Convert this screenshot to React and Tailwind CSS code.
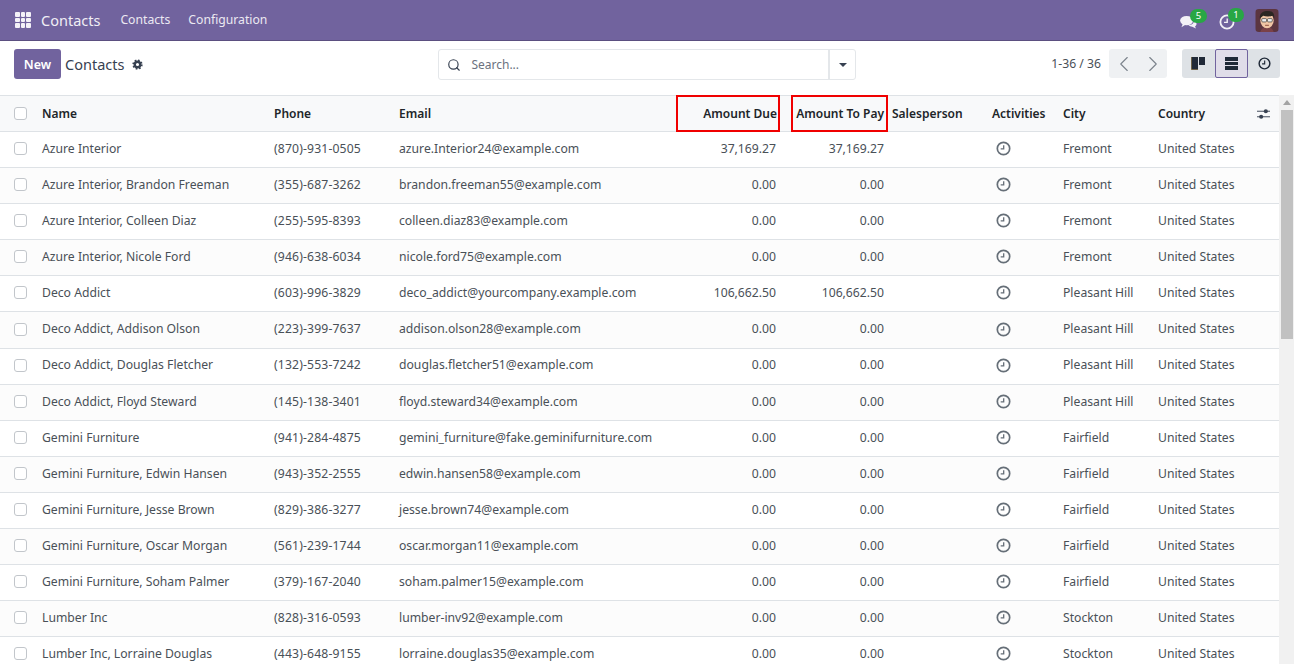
import { ChevronLeft, ChevronRight, Search } from "lucide-react";

const rows = [
  ["Azure Interior", "(870)-931-0505", "azure.Interior24@example.com", "37,169.27", "37,169.27", "Fremont"],
  ["Azure Interior, Brandon Freeman", "(355)-687-3262", "brandon.freeman55@example.com", "0.00", "0.00", "Fremont"],
  ["Azure Interior, Colleen Diaz", "(255)-595-8393", "colleen.diaz83@example.com", "0.00", "0.00", "Fremont"],
  ["Azure Interior, Nicole Ford", "(946)-638-6034", "nicole.ford75@example.com", "0.00", "0.00", "Fremont"],
  ["Deco Addict", "(603)-996-3829", "deco_addict@yourcompany.example.com", "106,662.50", "106,662.50", "Pleasant Hill"],
  ["Deco Addict, Addison Olson", "(223)-399-7637", "addison.olson28@example.com", "0.00", "0.00", "Pleasant Hill"],
  ["Deco Addict, Douglas Fletcher", "(132)-553-7242", "douglas.fletcher51@example.com", "0.00", "0.00", "Pleasant Hill"],
  ["Deco Addict, Floyd Steward", "(145)-138-3401", "floyd.steward34@example.com", "0.00", "0.00", "Pleasant Hill"],
  ["Gemini Furniture", "(941)-284-4875", "gemini_furniture@fake.geminifurniture.com", "0.00", "0.00", "Fairfield"],
  ["Gemini Furniture, Edwin Hansen", "(943)-352-2555", "edwin.hansen58@example.com", "0.00", "0.00", "Fairfield"],
  ["Gemini Furniture, Jesse Brown", "(829)-386-3277", "jesse.brown74@example.com", "0.00", "0.00", "Fairfield"],
  ["Gemini Furniture, Oscar Morgan", "(561)-239-1744", "oscar.morgan11@example.com", "0.00", "0.00", "Fairfield"],
  ["Gemini Furniture, Soham Palmer", "(379)-167-2040", "soham.palmer15@example.com", "0.00", "0.00", "Fairfield"],
  ["Lumber Inc", "(828)-316-0593", "lumber-inv92@example.com", "0.00", "0.00", "Stockton"],
  ["Lumber Inc, Lorraine Douglas", "(443)-648-9155", "lorraine.douglas35@example.com", "0.00", "0.00", "Stockton"],
];

function ClockIcon({ className }) {
  return (
    <svg viewBox="0 0 16 16" className={className} fill="none" stroke="currentColor">
      <circle cx="8" cy="8" r="6.6" strokeWidth="1.8" />
      <path d="M8.200 4.400V8.400H5" strokeWidth="1.4" />
    </svg>
  );
}

function Avatar() {
  return (
    <svg viewBox="0 0 24 24" className="w-6 h-[23px] rounded-sm">
      <rect width="24" height="24" fill="#5b3540" />
      <path d="M5 24c1-4 4-5 7-5s6 1 7 5z" fill="#7a4148" />
      <ellipse cx="12" cy="12" rx="7" ry="8" fill="#f0c5a5" />
      <path d="M4.500 10C4 4 8 2 13 2c5 0 7 3 6.500 8l-1.500-3c-3 1-7 1-10 0z" fill="#2b2622" />
      <rect x="6.500" y="10" width="5" height="3.500" rx="1" fill="#eee" stroke="#333" strokeWidth=".7" />
      <rect x="12.500" y="10" width="5" height="3.500" rx="1" fill="#eee" stroke="#333" strokeWidth=".7" />
      <path d="M10 17h4" stroke="#8a4a3c" strokeWidth="1" />
    </svg>
  );
}

function Checkbox() {
  return <span className="block w-[13px] h-[13px] rounded-[3px] border border-[#c2c6cb] bg-white" />;
}

export default function App() {
  return (
    <div className="h-[664px] overflow-hidden bg-white text-[12.2px] text-[#495057] font-['Noto_Sans',sans-serif] flex flex-col">
      {/* navbar */}
      <header className="h-[41px] shrink-0 bg-[#71639e] border-b border-[#5b4f80] flex items-center text-white">
        <div className="ml-[15px] grid grid-cols-3 gap-[1px] w-[16px] h-[16px]">
          {Array.from({ length: 9 }).map((_, i) => (
            <span key={i} className="bg-[#f3f1f7] rounded-[1px]" />
          ))}
        </div>
        <span className="ml-[10px] mt-px text-[14.500px] text-[#f0eef5]">Contacts</span>
        <span className="ml-[20px] mt-px text-[#ece9f2]">Contacts</span>
        <span className="ml-[18px] mt-px text-[#ece9f2]">Configuration</span>
        <div className="ml-auto flex items-center">
          <div className="relative mr-[22px]">
            <svg viewBox="0 0 18 15" className="w-[17px] h-[14px] mt-[3px]" fill="#f3f1f7">
              <ellipse cx="7" cy="6" rx="7" ry="5" />
              <path d="M3 9l-1.500 4 5-3z" />
              <path d="M15 6c2 1 3 3 2.500 4.500-.4 1-1 1.500-1.500 1.700l1 2.300-4-2c-1.500 0-3-.5-4-1.500 3 0 6-2 6-5z" />
            </svg>
            <span className="absolute -top-[3px] left-[10px] h-[14px] min-w-[17px] rounded-full bg-[#28a745] text-[9.500px] leading-[14px] text-center text-white">5</span>
          </div>
          <div className="relative mr-[20px]">
            <ClockIcon className="w-[16px] h-[16px] mt-[3px] text-[#f3f1f7]" />
            <span className="absolute -top-[3px] left-[9px] h-[14px] min-w-[16px] rounded-full bg-[#28a745] text-[9.500px] leading-[14px] text-center text-white">1</span>
          </div>
          <div className="mr-[15px]"><Avatar /></div>
        </div>
      </header>

      {/* control panel */}
      <div className="h-[54px] shrink-0 flex items-start pt-[8px] px-[14px]">
        <button className="h-[30px] w-[47px] pt-[2px] rounded-[3px] bg-[#71639e] text-white font-semibold text-[12.500px]">New</button>
        <span className="ml-[4px] leading-[30px] text-[14.500px] text-[#374151]">Contacts</span>
        <svg viewBox="0 0 16 16" className="ml-[8px] mt-[10px] w-[11px] h-[11px] text-[#374151]" fill="none" stroke="currentColor">
          <circle cx="8" cy="8" r="4" strokeWidth="3.400" />
          <circle cx="8" cy="8" r="6.200" strokeWidth="2.600" strokeDasharray="2.400 2.470" />
        </svg>

        <div className="ml-[295px] flex h-[31px] w-[418px] border border-[#e4e7ea] rounded-[3px]">
          <div className="flex-1 flex items-center border-r-2 border-[#e4e7ea]">
            <Search className="ml-[8px] w-[14px] h-[14px] text-[#374151]" strokeWidth={2} />
            <span className="ml-[10px] text-[12px] text-[#6b7280]">Search...</span>
          </div>
          <div className="w-[25px] flex items-center justify-center">
            <span className="w-0 h-0 border-x-[4px] border-x-transparent border-t-[4px] border-t-[#374151]" />
          </div>
        </div>

        <span className="ml-auto leading-[29px] text-[#495057]">1-36 / 36</span>
        <div className="ml-[8px] h-[29px] w-[58px] flex items-center rounded-[3px] bg-[#eff1f3] text-[#7b838b]">
          <span className="flex-1 flex justify-center"><ChevronLeft className="w-[26px] h-[26px]" strokeWidth={1} /></span>
          <span className="flex-1 flex justify-center"><ChevronRight className="w-[26px] h-[26px]" strokeWidth={1} /></span>
        </div>
        <div className="ml-[15px] h-[29px] flex items-stretch rounded-[3px] bg-[#dee2e6] text-[#1f2937]">
          <div className="w-[33px] pr-[2px] flex items-center justify-center">
            <svg viewBox="0 0 14 13" className="w-[14px] h-[13px]">
              <rect x="0" y="0" width="7" height="13" fill="#b99a5a" />
              <rect x="0.500" y="0" width="6.500" height="12.500" fill="#1f2937" />
              <rect x="8" y="0" width="6" height="8" fill="#1f2937" />
            </svg>
          </div>
          <div className="w-[33px] flex flex-col items-center justify-center gap-[1px] bg-[#e0dde9] border border-[#71639e] rounded-[2px]">
            <span className="w-[13px] h-[3.500px] bg-[#1f2937]" />
            <span className="w-[13px] h-[3.500px] bg-[#1f2937]" />
            <span className="w-[13px] h-[3.500px] bg-[#1f2937]" />
          </div>
          <div className="w-[32px] flex items-center justify-center">
            <ClockIcon className="w-[13px] h-[13px]" />
          </div>
        </div>
      </div>

      {/* list */}
      <div className="flex flex-1 min-h-0">
        <div className="flex-1 min-w-0">
          <table className="w-full table-fixed border-collapse">
            <colgroup>
              <col className="w-[33px]" />
              <col className="w-[233px]" />
              <col className="w-[124px]" />
              <col className="w-[277px]" />
              <col className="w-[114px]" />
              <col className="w-[108px]" />
              <col className="w-[100px]" />
              <col className="w-[71px]" />
              <col className="w-[95px]" />
              <col />
            </colgroup>
            <thead>
              <tr className="h-[36px] bg-[#f8f9fa] border-y border-[#dee2e6] text-[#212529] text-[12px]">
                <th className="pl-[14px] font-semibold"><Checkbox /></th>
                <th className="text-left pl-[9px] font-semibold">Name</th>
                <th className="text-left pl-[8px] font-semibold">Phone</th>
                <th className="text-left pl-[9px] font-semibold">Email</th>
                <th className="text-right pr-[4px] font-semibold relative">
                  Amount Due
                  <span className="absolute left-[9px] right-[1px] -top-px -bottom-px border-2 border-[#f00000]" />
                </th>
                <th className="text-right pr-[5px] font-semibold relative">
                  Amount To Pay
                  <span className="absolute left-[10px] right-[1px] -top-px -bottom-px border-2 border-[#f00000]" />
                </th>
                <th className="text-left pl-[3px] font-semibold">Salesperson</th>
                <th className="text-left pl-[3px] font-semibold">Activities</th>
                <th className="text-left pl-[3px] font-semibold">City</th>
                <th className="text-left pl-[3px] font-semibold relative">
                  Country
                  <svg viewBox="0 0 14 12" className="absolute right-[9px] top-[12px] w-[13px] h-[12px]" fill="#374151">
                    <rect x="0" y="2.500" width="14" height="1" />
                    <rect x="0" y="8.500" width="14" height="1" />
                    <circle cx="9.500" cy="3" r="2.200" />
                    <circle cx="4.500" cy="9" r="2.200" />
                  </svg>
                </th>
              </tr>
            </thead>
            <tbody>
              {rows.map((r) => (
                <tr key={r[0]} className="h-[36.100px] border-b border-[#dee2e6] even:bg-[#fcfcfc]">
                  <td className="pl-[14px] pb-[2px]"><Checkbox /></td>
                  <td className="pl-[9px] pb-[1px] whitespace-nowrap">{r[0]}</td>
                  <td className="pl-[8px] pb-[1px] tracking-[0.15px]">{r[1]}</td>
                  <td className="pl-[9px] pb-[1px] whitespace-nowrap">{r[2]}</td>
                  <td className="text-right pr-[5px] pb-[1px]">{r[3]}</td>
                  <td className="text-right pr-[5px] pb-[1px]">{r[4]}</td>
                  <td />
                  <td className="pb-[2px]"><ClockIcon className="ml-[7px] w-[15px] h-[15px] text-[#666f78]" /></td>
                  <td className="pl-[3px] pb-[1px] whitespace-nowrap">{r[5]}</td>
                  <td className="pl-[3px] pb-[1px] whitespace-nowrap">United States</td>
                </tr>
              ))}
            </tbody>
          </table>
        </div>
        {/* scrollbar */}
        <div className="w-[15px] shrink-0 bg-[#f1f1f1] flex flex-col items-center">
          <span className="mt-[5px] w-0 h-0 border-x-[4px] border-x-transparent border-b-[5px] border-b-[#a3a3a3]" />
          <span className="mt-[5px] w-[12px] h-[229px] bg-[#c1c1c1]" />
        </div>
      </div>
    </div>
  );
}
